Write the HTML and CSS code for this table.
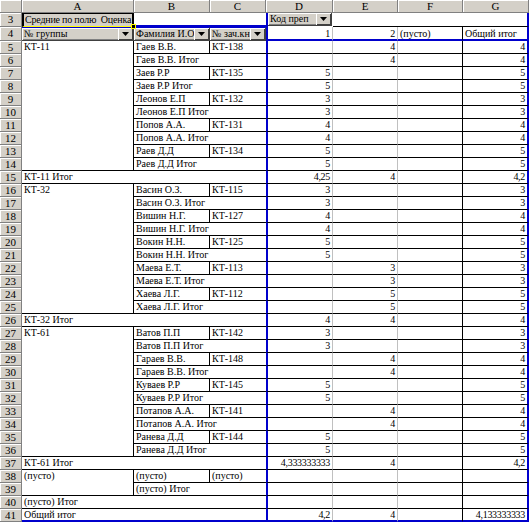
FILE: index.html
```html
<!DOCTYPE html>
<html lang="ru">
<head>
<meta charset="utf-8">
<title>Сводная таблица</title>
<link rel="stylesheet" href="styles.css">
</head>
<body>
<div class="sheet">
  <div class="corner"></div>
  <div class="ch">A</div><div class="ch">B</div><div class="ch">C</div><div class="ch">D</div><div class="ch">E</div><div class="ch">F</div><div class="ch">G</div>

  <div class="rh r3h">3</div>
  <div class="a3"><span class="lbl">Средние по полю  Оценка</span><span class="handle"></span></div>
  <div class="r3bc"></div>
  <div class="d3"><div class="pbtn"><span class="lbl">Код преп</span><span class="dd"><svg width="7" height="4" viewBox="0 0 7 4"><polygon points="0,0 7,0 3.5,4" fill="#000"/></svg></span></div></div>
  <div class="r3e"></div>
  <div class="r3e"></div>
  <div class="r3e g3"></div>

  <div class="rh r4h">4</div>
  <div class="pbtn p4"><span class="lbl">№ группы</span><span class="dd"><svg width="7" height="4" viewBox="0 0 7 4"><polygon points="0,0 7,0 3.5,4" fill="#000"/></svg></span></div>
  <div class="pbtn p4"><span class="lbl">Фамилия И.О</span><span class="dd"><svg width="7" height="4" viewBox="0 0 7 4"><polygon points="0,0 7,0 3.5,4" fill="#000"/></svg></span></div>
  <div class="pbtn p4"><span class="lbl">№ зач.кн</span><span class="dd"><svg width="7" height="4" viewBox="0 0 7 4"><polygon points="0,0 7,0 3.5,4" fill="#000"/></svg></span></div>
  <div class="c d h4 num">1</div>
  <div class="c e h4 num">2</div>
  <div class="c f h4">(пусто)</div>
  <div class="c g h4">Общий итог</div>

  <div class="rh">5</div>
  <div class="c blk span10">КТ-11</div>
  <div class="c">Гаев В.В.</div><div class="c cc">КТ-138</div>
  <div class="c d num"></div><div class="c e num">4</div><div class="c f"></div><div class="c g num">4</div>

  <div class="rh">6</div>
  <div class="c bc">Гаев В.В. Итог</div>
  <div class="c d num"></div><div class="c e num">4</div><div class="c f"></div><div class="c g num">4</div>

  <div class="rh">7</div>
  <div class="c">Заев Р.Р</div><div class="c cc">КТ-135</div>
  <div class="c d num">5</div><div class="c e num"></div><div class="c f"></div><div class="c g num">5</div>

  <div class="rh">8</div>
  <div class="c bc">Заев Р.Р Итог</div>
  <div class="c d num">5</div><div class="c e num"></div><div class="c f"></div><div class="c g num">5</div>

  <div class="rh">9</div>
  <div class="c">Леонов Е.П</div><div class="c cc">КТ-132</div>
  <div class="c d num">3</div><div class="c e num"></div><div class="c f"></div><div class="c g num">3</div>

  <div class="rh">10</div>
  <div class="c bc">Леонов Е.П Итог</div>
  <div class="c d num">3</div><div class="c e num"></div><div class="c f"></div><div class="c g num">3</div>

  <div class="rh">11</div>
  <div class="c">Попов А.А.</div><div class="c cc">КТ-131</div>
  <div class="c d num">4</div><div class="c e num"></div><div class="c f"></div><div class="c g num">4</div>

  <div class="rh">12</div>
  <div class="c bc">Попов А.А. Итог</div>
  <div class="c d num">4</div><div class="c e num"></div><div class="c f"></div><div class="c g num">4</div>

  <div class="rh">13</div>
  <div class="c">Раев Д.Д</div><div class="c cc">КТ-134</div>
  <div class="c d num">5</div><div class="c e num"></div><div class="c f"></div><div class="c g num">5</div>

  <div class="rh">14</div>
  <div class="c bc">Раев Д.Д Итог</div>
  <div class="c d num">5</div><div class="c e num"></div><div class="c f"></div><div class="c g num">5</div>

  <div class="rh">15</div>
  <div class="c ac">КТ-11 Итог</div>
  <div class="c d num">4,25</div><div class="c e num">4</div><div class="c f"></div><div class="c g num">4,2</div>

  <div class="rh">16</div>
  <div class="c blk span10">КТ-32</div>
  <div class="c">Васин О.З.</div><div class="c cc">КТ-115</div>
  <div class="c d num">3</div><div class="c e num"></div><div class="c f"></div><div class="c g num">3</div>

  <div class="rh">17</div>
  <div class="c bc">Васин О.З. Итог</div>
  <div class="c d num">3</div><div class="c e num"></div><div class="c f"></div><div class="c g num">3</div>

  <div class="rh">18</div>
  <div class="c">Вишин Н.Г.</div><div class="c cc">КТ-127</div>
  <div class="c d num">4</div><div class="c e num"></div><div class="c f"></div><div class="c g num">4</div>

  <div class="rh">19</div>
  <div class="c bc">Вишин Н.Г. Итог</div>
  <div class="c d num">4</div><div class="c e num"></div><div class="c f"></div><div class="c g num">4</div>

  <div class="rh">20</div>
  <div class="c">Вокин Н.Н.</div><div class="c cc">КТ-125</div>
  <div class="c d num">5</div><div class="c e num"></div><div class="c f"></div><div class="c g num">5</div>

  <div class="rh">21</div>
  <div class="c bc">Вокин Н.Н. Итог</div>
  <div class="c d num">5</div><div class="c e num"></div><div class="c f"></div><div class="c g num">5</div>

  <div class="rh">22</div>
  <div class="c">Маева Е.Т.</div><div class="c cc">КТ-113</div>
  <div class="c d num"></div><div class="c e num">3</div><div class="c f"></div><div class="c g num">3</div>

  <div class="rh">23</div>
  <div class="c bc">Маева Е.Т. Итог</div>
  <div class="c d num"></div><div class="c e num">3</div><div class="c f"></div><div class="c g num">3</div>

  <div class="rh">24</div>
  <div class="c">Хаева Л.Г.</div><div class="c cc">КТ-112</div>
  <div class="c d num"></div><div class="c e num">5</div><div class="c f"></div><div class="c g num">5</div>

  <div class="rh">25</div>
  <div class="c bc">Хаева Л.Г. Итог</div>
  <div class="c d num"></div><div class="c e num">5</div><div class="c f"></div><div class="c g num">5</div>

  <div class="rh">26</div>
  <div class="c ac">КТ-32 Итог</div>
  <div class="c d num">4</div><div class="c e num">4</div><div class="c f"></div><div class="c g num">4</div>

  <div class="rh">27</div>
  <div class="c blk span10">КТ-61</div>
  <div class="c">Ватов П.П</div><div class="c cc">КТ-142</div>
  <div class="c d num">3</div><div class="c e num"></div><div class="c f"></div><div class="c g num">3</div>

  <div class="rh">28</div>
  <div class="c bc">Ватов П.П Итог</div>
  <div class="c d num">3</div><div class="c e num"></div><div class="c f"></div><div class="c g num">3</div>

  <div class="rh">29</div>
  <div class="c">Гараев В.В.</div><div class="c cc">КТ-148</div>
  <div class="c d num"></div><div class="c e num">4</div><div class="c f"></div><div class="c g num">4</div>

  <div class="rh">30</div>
  <div class="c bc">Гараев В.В. Итог</div>
  <div class="c d num"></div><div class="c e num">4</div><div class="c f"></div><div class="c g num">4</div>

  <div class="rh">31</div>
  <div class="c">Куваев Р.Р</div><div class="c cc">КТ-145</div>
  <div class="c d num">5</div><div class="c e num"></div><div class="c f"></div><div class="c g num">5</div>

  <div class="rh">32</div>
  <div class="c bc">Куваев Р.Р Итог</div>
  <div class="c d num">5</div><div class="c e num"></div><div class="c f"></div><div class="c g num">5</div>

  <div class="rh">33</div>
  <div class="c">Потапов А.А.</div><div class="c cc">КТ-141</div>
  <div class="c d num"></div><div class="c e num">4</div><div class="c f"></div><div class="c g num">4</div>

  <div class="rh">34</div>
  <div class="c bc">Потапов А.А. Итог</div>
  <div class="c d num"></div><div class="c e num">4</div><div class="c f"></div><div class="c g num">4</div>

  <div class="rh">35</div>
  <div class="c">Ранева Д.Д</div><div class="c cc">КТ-144</div>
  <div class="c d num">5</div><div class="c e num"></div><div class="c f"></div><div class="c g num">5</div>

  <div class="rh">36</div>
  <div class="c bc">Ранева Д.Д Итог</div>
  <div class="c d num">5</div><div class="c e num"></div><div class="c f"></div><div class="c g num">5</div>

  <div class="rh">37</div>
  <div class="c ac">КТ-61 Итог</div>
  <div class="c d num">4,333333333</div><div class="c e num">4</div><div class="c f"></div><div class="c g num">4,2</div>

  <div class="rh">38</div>
  <div class="c blk span2">(пусто)</div>
  <div class="c">(пусто)</div><div class="c cc">(пусто)</div>
  <div class="c d num"></div><div class="c e num"></div><div class="c f"></div><div class="c g num"></div>

  <div class="rh">39</div>
  <div class="c bc">(пусто) Итог</div>
  <div class="c d num"></div><div class="c e num"></div><div class="c f"></div><div class="c g num"></div>

  <div class="rh">40</div>
  <div class="c ac">(пусто) Итог</div>
  <div class="c d num"></div><div class="c e num"></div><div class="c f"></div><div class="c g num"></div>

  <div class="rh">41</div>
  <div class="c ac last">Общий итог</div>
  <div class="c d num last">4,2</div><div class="c e num last">4</div><div class="c f last"></div><div class="c g num last">4,133333333</div>
</div>
</body>
</html>
```

FILE: styles.css
```css
* { box-sizing: border-box; }
html, body { margin: 0; padding: 0; background: #ffffff; }
body {
  font-family: "Liberation Serif", "Times New Roman", serif;
  font-size: 10px;
  color: #000;
  overflow: hidden;
}
.sheet {
  display: grid;
  grid-template-columns: 22px 112px 76px 56px 67px 65px 65px 66px;
  grid-template-rows: 13px 14px 14px;
  grid-auto-rows: 13px;
  width: 529px;
}
.corner, .ch, .rh {
  background: #d4d0c8;
  border-right: 1px solid #808080;
  border-bottom: 1px solid #808080;
  box-shadow: inset 1px 1px 0 #ffffff;
  text-align: center;
  font-size: 11px;
  line-height: 12px;
  white-space: nowrap;
}
.rh { grid-column: 1; }
.r3h, .r4h { line-height: 13px; }

/* ordinary cells */
.c {
  border-right: 1px solid #000;
  border-bottom: 1px solid #000;
  padding: 0 2px;
  line-height: 12px;
  white-space: nowrap;
  overflow: hidden;
}
.cc { border-right: none; }
.bc { grid-column: span 2; border-right: none; }
.ac { grid-column: span 3; border-right: none; }
.span10 { grid-row: span 10; }
.span2 { grid-row: span 2; }
.num { text-align: right; letter-spacing: -0.3px; }
.d { border-left: 2px solid #0000cc; border-right-color: #c0c0c0; }
.e { border-right-color: #c0c0c0; }
.f { border-right-color: #000; }
.g { border-right: 2px solid #0000cc; }
.h4 { border-bottom: 2px solid #0000cc; line-height: 13px; }
.last { border-bottom: 2px solid #0000cc; }

/* row 3 */
.a3 {
  position: relative;
  display: flex;
  align-items: center;
  background: #d4d0c8;
  border-left: 2px solid #000;
  border-top: 1px solid #000;
  border-right: 2px solid #000;
  border-bottom: 1px solid #ffff00;
  padding: 0 1px;
  line-height: 12px;
  letter-spacing: -0.2px;
  white-space: pre;
}
.handle {
  position: absolute;
  right: -4px;
  bottom: -3px;
  width: 5px;
  height: 5px;
  background: #000;
  border: 1px solid #ffff00;
  z-index: 2;
}
.r3bc { grid-column: span 2; border-bottom: 2px solid #0000cc; }
.d3 { border-left: 2px solid #0000cc; padding: 0 1px 1px 0; }
.r3e { border-bottom: 1px solid #000; }
.g3 { border-right: 2px solid #0000cc; }

/* pivot field buttons */
.pbtn {
  display: flex;
  align-items: stretch;
  height: 100%;
  background: #d4d0c8;
  border-right: 1px solid #404040;
  border-bottom: 1px solid #404040;
  box-shadow: inset 1px 1px 0 #ffffff, inset -1px -1px 0 #808080;
  white-space: nowrap;
  overflow: hidden;
}
.p4 { border-top: 1px solid #0000cc; }
.pbtn .lbl {
  flex: 1;
  min-width: 0;
  padding: 0 1px 0 2px;
  line-height: 12px;
  overflow: hidden;
}
.dd {
  width: 15px;
  flex: none;
  display: flex;
  align-items: center;
  justify-content: center;
  background: #d4d0c8;
  box-shadow: inset 1px 1px 0 #ffffff, inset -1px -1px 0 #404040;
}
.dd svg { display: block; }
```
